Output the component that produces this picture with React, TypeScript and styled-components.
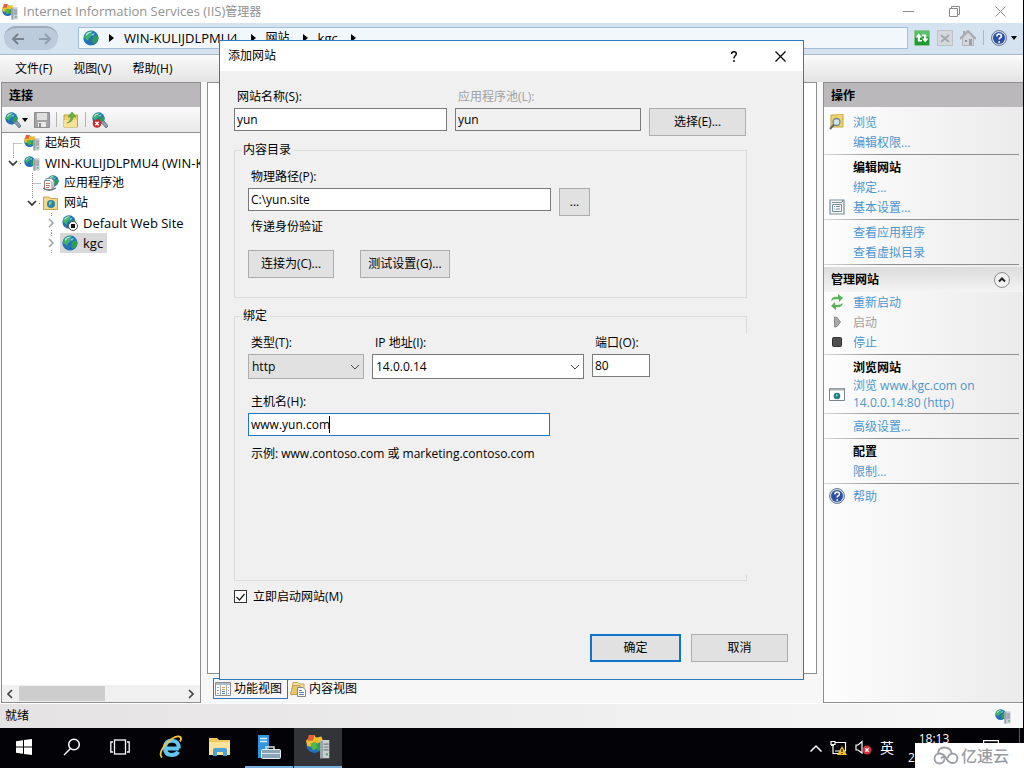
import React from 'react';
import styled, { createGlobalStyle, css } from 'styled-components';

const GlobalStyle = createGlobalStyle`
  *, *::before, *::after { box-sizing: border-box; }
  body {
    margin: 0;
    background: #000;
    color: #000;
    font: 12px/16px "Open Sans", "Noto Sans CJK SC", sans-serif;
  }
  button, input, select { font: inherit; color: inherit; margin: 0; }
  button { border: 0; padding: 0; background: none; }
  svg { display: block; flex: none; }
`;

/* ---------- page frame ---------- */

const Desktop = styled.div`
  position: relative;
  display: flex;
  flex-direction: column;
  min-height: 100vh;
`;

const AppWindow = styled.div`
  flex: 1;
  display: flex;
  flex-direction: column;
  background: #f7f7f7;
  border-right: 1px solid #000;
`;

const TitleBar = styled.header`
  display: flex;
  align-items: center;
  height: 23px;
  padding-left: 2px;
  background: #fff;
  color: #929292;
  font-size: 13px;
`;

const TitleText = styled.span`
  flex: 1;
  padding-left: 5px;
`;

const Han = styled.span`
  font-size: 12px;
`;

const CaptionButton = styled.button`
  display: flex;
  align-items: center;
  justify-content: center;
  width: 46px;
  height: 22px;
  color: #8a8a8a;
`;

const AddressBar = styled.div`
  display: flex;
  align-items: center;
  height: 32px;
  padding: 0 6px 2px 4px;
  background: #d5e2ef;
  border-bottom: 1px solid #a9b8c8;
`;

const NavPill = styled.div`
  display: flex;
  align-items: center;
  justify-content: space-around;
  width: 54px;
  height: 24px;
  margin-right: 20px;
  border-radius: 12px;
  border-top: 2px solid #9eabb9;
  background: #bccbdc;
  color: #78838f;
`;

const Crumbs = styled.nav`
  flex: 1;
  display: flex;
  align-items: center;
  gap: 10px;
  height: 22px;
  padding-left: 4px;
  margin-right: 6px;
  background: #f2f7fc;
  border: 1px solid #a4bfd8;
`;

const Crumb = styled.span<{ $latin?: boolean }>`
  margin-right: 3px;
  font-size: ${p => (p.$latin ? 13 : 12)}px;
`;

const AddressTools = styled.div`
  display: flex;
  align-items: center;
  gap: 7px;
`;

const Separator = styled.i`
  width: 1px;
  height: 15px;
  background: #b4b4b4;
`;

const MenuBar = styled.nav`
  display: flex;
  align-items: center;
  gap: 21px;
  height: 27px;
  padding-left: 15px;
  background: linear-gradient(#fbfbfb, #e5e4e5);
`;

const Workspace = styled.div`
  flex: 1;
  display: grid;
  grid-template-columns: 200px minmax(0, 1fr) 200px;
  gap: 6px;
  padding-left: 1px;
`;

const Pane = styled.section`
  display: flex;
  flex-direction: column;
  min-width: 0;
  border: 1px solid #8e8e8e;
  background: #fff;
`;

const PaneTitle = styled.h2`
  margin: 0;
  height: 24px;
  padding-left: 7px;
  background: #bab8bb;
  font-size: 12px;
  line-height: 26px;
`;

const PaneTools = styled.div`
  display: flex;
  align-items: center;
  gap: 6px;
  height: 26px;
  padding-left: 3px;
  background: linear-gradient(#fbfbfb, #e8e8e8);
  border-bottom: 1px solid #8e8e8e;
`;

const ToolPair = styled.button<{ $loose?: boolean }>`
  display: flex;
  align-items: center;
  gap: ${p => (p.$loose ? 4 : 1)}px;
`;

/* ---------- tree ---------- */

const Tree = styled.ul`
  flex: 1;
  margin: 0;
  padding: 0;
  list-style: none;
  overflow: hidden;
`;

const TreeRow = styled.li`
  display: flex;
  align-items: center;
  height: 20px;
  white-space: nowrap;
`;

const TreeNode = styled.span<{ $selected?: boolean; $latin?: boolean }>`
  display: flex;
  align-items: center;
  gap: 5px;
  height: 20px;
  padding: 0 4px 0 2px;
  font-size: ${p => (p.$latin ? 13 : 12)}px;
  background: ${p => (p.$selected ? '#d9d9d9' : 'transparent')};
`;

const ScrollTrack = styled.div`
  display: flex;
  align-items: center;
  height: 17px;
  padding: 0 4px 0 3px;
  gap: 4px;
  background: #f0f0f0;
`;

const ScrollSpace = styled.div`
  flex: 1;
  height: 15px;
`;

const ScrollThumb = styled.div`
  width: 53%;
  height: 100%;
  background: #cdcdcd;
`;

/* ---------- centre ---------- */

const Centre = styled.div`
  display: flex;
  flex-direction: column;
  min-width: 0;
`;

const Canvas = styled(Pane)`
  flex: 1;
`;

const ViewTabs = styled.div`
  display: flex;
  height: 29px;
  padding: 4px 0 0 6px;
`;

const ViewTab = styled.button<{ $active?: boolean }>`
  display: flex;
  align-items: center;
  gap: 3px;
  height: 21px;
  padding: 0 5px 0 1px;
  border: 1px solid ${p => (p.$active ? '#2b77bd' : 'transparent')};
`;

/* ---------- actions ---------- */

const ActionsPane = styled(Pane)`
  border-right: 0;
  background: linear-gradient(90deg, #fdfdfd, #ebebeb);
`;

const ActionList = styled.div`
  padding-top: 5px;
`;

const ActionRow = styled.div`
  display: grid;
  grid-template-columns: 16px 1fr;
  align-items: center;
  column-gap: 8px;
  min-height: 20px;
  padding-left: 5px;
`;

const ActionLink = styled.a<{ $wide?: boolean }>`
  grid-column: 2;
  padding-top: 2px;
  color: #4b97cf;
  text-decoration: none;
  ${p => p.$wide && css`
    padding-top: 0;
    line-height: 17px;
  `}
`;

const ActionOff = styled.span`
  grid-column: 2;
  padding-top: 2px;
  color: #a0a0a0;
`;

const ActionHeading = styled.strong`
  grid-column: 2;
  padding-top: 2px;
`;

const Rule = styled.hr`
  height: 1px;
  margin: 2px 4px 2px 0;
  border: 0;
  background: linear-gradient(90deg, #d8d8d8, #8e8e8e 30%);
`;

const GroupBar = styled.div`
  display: flex;
  align-items: center;
  justify-content: space-between;
  height: 25px;
  padding: 0 13px 0 7px;
  background: linear-gradient(#dcdcdc, #f4f4f4);
  font-weight: bold;
`;

const StatusBar = styled.footer`
  display: flex;
  align-items: center;
  justify-content: space-between;
  height: 25px;
  padding: 0 12px 0 5px;
  border-top: 1px solid #fff;
  background: linear-gradient(90deg, #e4e2e3, #f8f8f8);
`;

/* ---------- dialog ---------- */

const Overlay = styled.div`
  position: absolute;
  inset: 0;
  display: flex;
  justify-content: center;
  align-items: flex-start;
  padding: 40px 1px 0 0;
`;

const Dialog = styled.form`
  width: 585px;
  height: 640px;
  display: flex;
  flex-direction: column;
  border: 1px solid #2b7cbc;
  background: #f0f0f0;
`;

const DialogTitle = styled.div`
  display: flex;
  align-items: center;
  height: 30px;
  padding-left: 3px;
  background: #fff;
`;

const DialogBody = styled.div`
  flex: 1;
  padding: 16px 15px 0 14px;
`;

const Row = styled.div<{ $gap?: number }>`
  display: flex;
  align-items: flex-start;
  gap: ${p => p.$gap || 8}px;
`;

const Field = styled.div<{ $w: number }>`
  width: ${p => p.$w}px;
`;

const Label = styled.label<{ $muted?: boolean }>`
  display: block;
  height: 21px;
  padding-left: 3px;
  line-height: 19px;
  color: ${p => (p.$muted ? '#a0a0a0' : '#000')};
`;

const Note = styled.p`
  margin: 0;
  padding-left: 3px;
  line-height: 18px;
`;

const TextBox = styled.input<{ $focus?: boolean }>`
  display: block;
  width: 100%;
  height: 23px;
  padding: 0 2px;
  border: 1px solid ${p => (p.$focus ? '#1f78c1' : '#7a7a7a')};
  border-radius: 0;
  background: #fff;
  outline: 0;
  &:read-only { background: #f0f0f0; }
`;

const Over = styled.div`
  position: relative;
`;

const Caret = styled.i`
  position: absolute;
  left: 81px;
  top: 3px;
  width: 1px;
  height: 17px;
  background: #000;
`;

const Arrow = styled.span`
  position: absolute;
  right: 4px;
  top: 8px;
  pointer-events: none;
`;

const Picker = styled.select<{ $grey?: boolean }>`
  appearance: none;
  display: block;
  width: 100%;
  height: 25px;
  padding: 0 3px;
  border: 1px solid ${p => (p.$grey ? '#adadad' : '#7a7a7a')};
  border-radius: 0;
  background: ${p => (p.$grey ? '#e1e1e1' : '#fff')};
`;

const PushButton = styled.button<{ $w: number; $primary?: boolean; $beside?: boolean }>`
  width: ${p => p.$w}px;
  height: 28px;
  margin-top: ${p => (p.$beside ? 21 : 0)}px;
  background: #e1e1e1;
  border: ${p => (p.$primary ? '2px solid #0f74cc' : '1px solid #adadad')};
`;

const Group = styled.fieldset<{ $h: number; $open?: boolean }>`
  width: 513px;
  height: ${p => p.$h}px;
  min-width: 0;
  margin: 0;
  padding: 9px 13px 0;
  border: 1px solid #dcdcdc;
  ${p => p.$open && css`
    border-right: 0;
    background:
      linear-gradient(#dcdcdc, #dcdcdc) right top / 1px 16px no-repeat,
      linear-gradient(#dcdcdc, #dcdcdc) right bottom / 1px 5px no-repeat;
  `}
`;

const Legend = styled.legend`
  height: 16px;
  margin-left: -7px;
  padding: 0 3px 0 2px;
`;

const Stack = styled.div<{ $gap: number }>`
  display: flex;
  flex-direction: column;
  gap: ${p => p.$gap}px;
`;

const CheckLine = styled.label`
  display: flex;
  align-items: center;
  gap: 6px;
  line-height: 19px;
`;

const CheckBox = styled.input`
  appearance: none;
  width: 13px;
  height: 13px;
  border: 1px solid #333;
  background: #fff;
`;

const Tick = styled.span`
  position: absolute;
  left: 2px;
  top: 6px;
  pointer-events: none;
`;

const DialogFooter = styled.div`
  display: flex;
  justify-content: flex-end;
  gap: 10px;
  padding: 0 15px 17px;
`;

/* ---------- taskbar ---------- */

const Taskbar = styled.div`
  position: relative;
  display: flex;
  align-items: center;
  height: 40px;
  background: #020207;
  color: #fff;
`;

const TaskGroup = styled.div`
  display: flex;
  gap: 1px;
  padding-left: 3px;
`;

const TaskButton = styled.button<{ $running?: boolean; $active?: boolean }>`
  display: flex;
  align-items: center;
  justify-content: center;
  width: 48px;
  height: 40px;
  background: ${p => (p.$active ? '#333438' : 'transparent')};
  border-bottom: 2px solid transparent;
  border-bottom-color: ${p => (p.$running ? '#76b0dd' : 'transparent')};
`;

const Tray = styled.div`
  display: flex;
  align-items: center;
  gap: 8px;
  margin-left: auto;
  font-size: 14px;
`;

const Clock = styled.div`
  width: 52px;
  height: 40px;
  margin: 0 23px 0 14px;
  padding-top: 1px;
  font-size: 12px;
  line-height: 19px;
  text-align: center;
`;

const DateText = styled.div`
  text-align: left;
`;

const DesktopEdge = styled.i`
  width: 5px;
  height: 40px;
  margin-left: 20px;
  border-left: 1px solid #55555a;
`;

const Watermark = styled.div`
  position: absolute;
  right: 0;
  bottom: 0;
  display: flex;
  align-items: center;
  gap: 2px;
  width: 109px;
  height: 25px;
  padding-left: 18px;
  background: #fff;
  color: #9a9ca4;
  font-size: 16px;
  line-height: 24px;
  font-weight: 500;
`;

/* ---------- drawings ---------- */

const GlobeShape = ({ x = 0, y = 0, r = 7 }: { x?: number; y?: number; r?: number }) => (
  <g transform={`translate(${x} ${y}) scale(${r / 8})`}>
    <circle cx="8" cy="8" r="7.6" fill="#2470b8" />
    <path d="M2 4 Q6 0 10 1 L8 4 L9 6 L6 8 L5 11 L3 9 L1 8 Z" fill="#3fb46b" />
    <path d="M10 7 L14 5 L15.500 8 Q15 12 11 14 L9 11 Z" fill="#2f9d58" />
    <path d="M3 4 Q6 1 9 2 Q5 3 3 6 Z" fill="#c4ecf4" />
    <path d="M8 4 L12 3 L10 6 Z" fill="#86d0f0" />
  </g>
);

const GlobeIcon = () => (
  <svg width="16" height="16" viewBox="0 0 16 16"><GlobeShape r={8} /></svg>
);

const TowerShape = () => (
  <g transform="translate(10 4)">
    <path d="M0 .5L2 -.5H6.500V12.500H0Z" fill="#c9ced2" />
    <path d="M0 .5L2 0V12.500H0Z" fill="#98a2a9" />
    <path d="M2.500 2.500H6M2.500 4.500H6M2.500 6.500H6" stroke="#6d7982" strokeWidth=".8" />
    <rect x="4" y="9" width="1.500" height="1.500" fill="#3fae5a" />
  </g>
);

const ServerIcon = ({ warm, size = 16 }: { warm?: boolean; size?: number }) => (
  <svg width={size} height={size} viewBox="0 0 17 17">
    <GlobeShape r={6} y={1} />
    {warm && <path d="M0 4L3 1L6 0L7 2L11 1L12 4L8 6L5 5L4 8L1 8Z" fill="#f4bd2c" />}
    {warm && <path d="M2 0L6 0L5 4L1 4Z" fill="#e2603a" />}
    {warm && <path d="M3 6L7 5L8 9L5 11Z" fill="#52b84c" />}
    <TowerShape />
  </svg>
);

const TriRight = () => (
  <svg width="5" height="8" viewBox="0 0 5 8"><path d="M0 0L5 4L0 8Z" fill="#000" /></svg>
);

const TriDown = () => (
  <svg width="6" height="4" viewBox="0 0 6 4"><path d="M0 0H6L3 4Z" fill="#000" /></svg>
);

const NavArrow = ({ back }: { back?: boolean }) => (
  <svg width="14" height="12" viewBox="0 0 14 12" fill="none" stroke="currentColor" strokeWidth="2" opacity={back ? 1 : 0.6}>
    <path d={back ? 'M13 6H2M7 1L2 6L7 11' : 'M1 6H12M7 1L12 6L7 11'} />
  </svg>
);

const RefreshBox = () => (
  <svg width="16" height="16" viewBox="0 0 16 16">
    <rect x=".5" y=".5" width="15" height="15" rx="1" fill="#1f9a30" stroke="#8cc795" />
    <rect x="1" y="1" width="14" height="6" fill="#57c163" />
    <path d="M1.500 7.500L4.800 3.500L8 7.500H6V10H8V11.500H3.800V7.500ZM14.500 8.500L11.200 12.500L8 8.500H10V6H8V4.500H12.200V8.500Z" fill="#fff" />
  </svg>
);

const StopBox = () => (
  <svg width="16" height="16" viewBox="0 0 16 16">
    <rect x=".5" y=".5" width="15" height="15" fill="#d6d9dc" stroke="#bdc1c5" />
    <path d="M4 5L12 12M12 5L4 12" stroke="#a6aaae" strokeWidth="2" />
  </svg>
);

const HomeIcon = () => (
  <svg width="16" height="16" viewBox="0 0 16 16">
    <path d="M2.500 8V15.500H13.500V8L8 2Z" fill="#d5d6d8" stroke="#b3b5b8" />
    <path d="M0 9L8 1L16 9" fill="none" stroke="#a8aaad" strokeWidth="2" />
    <path d="M3 1H5V4H3Z" fill="#a6a8aa" />
    <rect x="5" y="10" width="2" height="2" fill="#8d949b" />
    <rect x="9" y="9" width="3" height="6" fill="#98a0a8" />
  </svg>
);

const HelpIcon = () => (
  <svg width="16" height="16" viewBox="0 0 16 16">
    <circle cx="8" cy="8" r="7.500" fill="#d4dbe8" stroke="#6d7b95" />
    <circle cx="8" cy="8" r="6" fill="#2b50a8" />
    <path d="M5.800 6.400Q5.900 4 8.100 4Q10.400 4 10.400 6Q10.400 7.200 9 8Q8.200 8.500 8.200 9.600" fill="none" stroke="#fff" strokeWidth="1.600" />
    <circle cx="8.200" cy="12" r="1" fill="#fff" />
  </svg>
);

const ConnectIcon = ({ stop }: { stop?: boolean }) => (
  <svg width="16" height="16" viewBox="0 0 16 16">
    <GlobeShape r={6.5} />
    <path d="M9 10L12 9L16 14L14 16Z" fill="#8fa2b0" stroke="#64798a" />
    {stop && <circle cx="5" cy="11.500" r="4.300" fill="#cc2a2a" />}
    {stop && <path d="M3.300 9.800L6.700 13.200M6.700 9.800L3.300 13.200" stroke="#fff" strokeWidth="1.500" />}
  </svg>
);

const FloppyIcon = () => (
  <svg width="16" height="16" viewBox="0 0 16 16">
    <path d="M.5 .5H15.500V15.500H.5Z" fill="#a3a3a3" stroke="#8b8b8b" />
    <rect x="3" y="1" width="10" height="7" fill="#dedede" />
    <rect x="4" y="10" width="8" height="5" fill="#e8e8e8" />
    <rect x="5" y="11" width="2" height="4" fill="#8b8b8b" />
  </svg>
);

const FolderUpIcon = () => (
  <svg width="16" height="16" viewBox="0 0 16 16">
    <path d="M1 3H14.500V15H1Z" fill="#efd277" stroke="#c39f42" />
    <path d="M1 8H14V15H1Z" fill="#f6e199" />
    <path d="M4 11Q8 9 8 5H5L9 0L13 5H10Q10 10 4 11Z" fill="#62b53a" stroke="#3f8b27" strokeWidth=".5" />
  </svg>
);

const PoolIcon = () => (
  <svg width="16" height="16" viewBox="0 0 16 16">
    <GlobeShape r={6} x={4} />
    <path d="M3 3.500H8.500L11 6V13H3Z" fill="#fff" stroke="#8a929b" />
    <path d="M1.500 5.500H7L9 7.500V14.500H1.500Z" fill="#fff" stroke="#7e8791" />
    <path d="M3 8.500H7M3 10.500H7M3 12.500H6" stroke="#db6c55" />
    <path d="M0 13Q6 17.500 13 13" fill="none" stroke="#6b7680" strokeWidth="1.300" />
  </svg>
);

const SitesIcon = () => (
  <svg width="16" height="16" viewBox="0 0 16 16">
    <path d="M.5 2H6L8 3.500H14.500V14.500H.5Z" fill="#f4d88e" stroke="#cfa550" />
    <circle cx="8" cy="9" r="4" fill="#2b87a8" />
    <path d="M6 7L9 6L8 9L6 11Z" fill="#7ed096" />
  </svg>
);

const SiteStoppedIcon = () => (
  <svg width="16" height="16" viewBox="0 0 16 16">
    <GlobeShape r={7} />
    <circle cx="11" cy="11" r="4.500" fill="#fff" stroke="#555" />
    <rect x="9" y="9" width="4" height="4" fill="#111" />
  </svg>
);

const ChevronGlyph = ({ dir, thin }: { dir: 'down' | 'left' | 'right'; thin?: boolean }) => {
  const d = { down: 'M1 3L5 7L9 3', left: 'M7 1L3 5L7 9', right: 'M3 1L7 5L3 9' }[dir];
  return (
    <svg width="10" height="10" viewBox="0 0 10 10" fill="none" stroke="#444" strokeWidth={thin ? 1 : 1.7}><path d={d} /></svg>
  );
};

const Guide = ({ width, kind }: { width: number; kind: 'top' | 'server' | 'branch' | 'open' | 'leaf' }) => (
  <svg width={width} height="20" viewBox={`0 0 ${width} 20`} fill="none">
    {kind === 'top' && <path d="M11.500 10.500V20M11.500 10.500H22" stroke="#888" strokeDasharray="1 1" />}
    {kind === 'server' && <path d="M11.500 0V5M18 10.500H22" stroke="#888" strokeDasharray="1 1" />}
    {kind === 'server' && <path d="M7 8L11 12L15 8" stroke="#333" strokeWidth="1.700" />}
    {kind === 'branch' && <path d="M30.500 0V20M30.500 10.500H41" stroke="#888" strokeDasharray="1 1" />}
    {kind === 'open' && <path d="M30.500 0V5M37 10.500H41" stroke="#888" strokeDasharray="1 1" />}
    {kind === 'open' && <path d="M26 8L30 12L34 8" stroke="#333" strokeWidth="1.700" />}
    {kind === 'leaf' && <path d="M49.500 0V3M49.500 17V20" stroke="#999" strokeDasharray="1 1" />}
    {kind === 'leaf' && <path d="M47 6L51 10L47 14" stroke="#a0a0a0" strokeWidth="1.500" />}
  </svg>
);

const FeaturesIcon = () => (
  <svg width="16" height="16" viewBox="0 0 16 16" fill="none">
    <path d="M.5 1.500H15.500V14.500H.5Z" fill="#fff" stroke="#8a8f95" />
    <path d="M1 3H15" stroke="#b0bac4" strokeWidth="2" />
    <path d="M5.500 4V14M11.500 4V14" stroke="#a5adb5" />
    <path d="M2 6.500H4M2 9.500H4M2 12.500H4M13 6.500H14M13 9.500H14M13 12.500H14" stroke="#8fa6bd" />
    <path d="M7 6.500H10M7 8.500H10" stroke="#ef9b48" />
    <path d="M7 10.500H10M7 12.500H10" stroke="#5f87b5" />
  </svg>
);

const ContentIcon = () => (
  <svg width="16" height="16" viewBox="0 0 16 16">
    <path d="M3 1.500H8L9.500 3H14V8L1 14Z" fill="#f7e3a4" stroke="#c7a14d" />
    <path d="M.5 13L3 4.500H10V13.500H1Z" fill="#edc66b" stroke="#c7a14d" />
    <path d="M7.500 6.500H13L15.500 9V15.500H7.500Z" fill="#fff" stroke="#7e8790" />
    <path d="M9 9.500H12M9 11.500H14M9 13.500H14" stroke="#5e83b3" />
  </svg>
);

const ExploreIcon = () => (
  <svg width="16" height="16" viewBox="0 0 16 16">
    <path d="M2 1H8L9 0H14V13H2Z" fill="#eed36e" stroke="#c8a542" />
    <circle cx="7.500" cy="8" r="3.500" fill="#cfe6f2" stroke="#728291" strokeWidth="1.300" />
    <path d="M5 10.500L1 15" stroke="#666" strokeWidth="2" />
  </svg>
);

const SettingsSheetIcon = () => (
  <svg width="16" height="16" viewBox="0 0 16 16" fill="none" stroke="#78909a">
    <path d="M1 1H15V15H1Z" fill="#f5f7f8" strokeWidth="1.200" />
    <path d="M3 3.500H13M3.500 5.500H12.500V12.500H3.500ZM5 7.500H6M7 7.500H11M5 10H6M7 10H11M13.500 1V3" />
  </svg>
);

const RestartIcon = () => (
  <svg width="16" height="16" viewBox="0 0 16 16" fill="#58b354">
    <path d="M2 7Q3 2 9 3L9 0L14 4L10 8V5.500Q6 4 2 7Z" />
    <path d="M14 9Q13 14 7 13L7 16L2 12L6 8V10.500Q10 12 14 9Z" />
  </svg>
);

const PlayIcon = () => (
  <svg width="16" height="16" viewBox="0 0 16 16"><path d="M5.500 3V13L8 12.500L11.500 8L8 3.500Z" fill="#a8a8a8" stroke="#878787" /></svg>
);

const StopIcon = () => (
  <svg width="16" height="16" viewBox="0 0 16 16"><rect x="3.500" y="3.500" width="9" height="9" rx="1" fill="#505050" stroke="#333" /></svg>
);

const BrowseSiteIcon = () => (
  <svg width="16" height="16" viewBox="0 0 16 16">
    <path d="M.5 2.500H15.500V14.500H.5Z" fill="#fff" stroke="#7c8389" />
    <path d="M1 3.500H15" stroke="#a9b0b6" strokeWidth="2" />
    <circle cx="8" cy="10" r="3.300" fill="#247f91" />
    <path d="M7 8L9 9L7 11Z" fill="#8ddd9b" />
  </svg>
);

const CollapseIcon = () => (
  <svg width="16" height="16" viewBox="0 0 16 16" fill="none">
    <circle cx="8" cy="8" r="7.500" fill="#f1f1f1" stroke="#8c8c8c" />
    <path d="M5 9.500L8 6.500L11 9.500" stroke="#222" strokeWidth="2" />
  </svg>
);

/* ---------- page ---------- */

const ConnectionsPane = () => (
  <Pane>
    <PaneTitle>连接</PaneTitle>
    <PaneTools>
      <ToolPair type="button" aria-label="连接"><ConnectIcon /><TriDown /></ToolPair>
      <ToolPair type="button" aria-label="保存"><FloppyIcon /></ToolPair>
      <Separator />
      <ToolPair type="button" aria-label="向上"><FolderUpIcon /></ToolPair>
      <Separator />
      <ToolPair type="button" aria-label="断开"><ConnectIcon stop /></ToolPair>
    </PaneTools>
    <Tree>
      <TreeRow><Guide width={20} kind="top" /><TreeNode><ServerIcon warm />起始页</TreeNode></TreeRow>
      <TreeRow><Guide width={20} kind="server" /><TreeNode $latin><ServerIcon />WIN-KULIJDLPMU4 (WIN-KULIJDLPMU4)</TreeNode></TreeRow>
      <TreeRow><Guide width={39} kind="branch" /><TreeNode><PoolIcon />应用程序池</TreeNode></TreeRow>
      <TreeRow><Guide width={39} kind="open" /><TreeNode><SitesIcon />网站</TreeNode></TreeRow>
      <TreeRow><Guide width={58} kind="leaf" /><TreeNode $latin><SiteStoppedIcon />Default Web Site</TreeNode></TreeRow>
      <TreeRow><Guide width={58} kind="leaf" /><TreeNode $latin $selected><GlobeIcon />kgc</TreeNode></TreeRow>
    </Tree>
    <ScrollTrack>
      <ChevronGlyph dir="left" />
      <ScrollSpace><ScrollThumb /></ScrollSpace>
      <ChevronGlyph dir="right" />
    </ScrollTrack>
  </Pane>
);

const Actions = () => (
  <ActionsPane>
    <PaneTitle>操作</PaneTitle>
    <ActionList>
      <ActionRow><ExploreIcon /><ActionLink href="#">浏览</ActionLink></ActionRow>
      <ActionRow><ActionLink href="#">编辑权限...</ActionLink></ActionRow>
      <Rule />
      <ActionRow><ActionHeading>编辑网站</ActionHeading></ActionRow>
      <ActionRow><ActionLink href="#">绑定...</ActionLink></ActionRow>
      <ActionRow><SettingsSheetIcon /><ActionLink href="#">基本设置...</ActionLink></ActionRow>
      <Rule />
      <ActionRow><ActionLink href="#">查看应用程序</ActionLink></ActionRow>
      <ActionRow><ActionLink href="#">查看虚拟目录</ActionLink></ActionRow>
      <Rule />
      <GroupBar>管理网站<button type="button" aria-label="折叠"><CollapseIcon /></button></GroupBar>
      <ActionRow><RestartIcon /><ActionLink href="#">重新启动</ActionLink></ActionRow>
      <ActionRow><PlayIcon /><ActionOff>启动</ActionOff></ActionRow>
      <ActionRow><StopIcon /><ActionLink href="#">停止</ActionLink></ActionRow>
      <Rule />
      <ActionRow><ActionHeading>浏览网站</ActionHeading></ActionRow>
      <ActionRow><BrowseSiteIcon /><ActionLink href="#" $wide>浏览 www.kgc.com on<br />14.0.0.14:80 (http)</ActionLink></ActionRow>
      <Rule />
      <ActionRow><ActionLink href="#">高级设置...</ActionLink></ActionRow>
      <Rule />
      <ActionRow><ActionHeading>配置</ActionHeading></ActionRow>
      <ActionRow><ActionLink href="#">限制...</ActionLink></ActionRow>
      <Rule />
      <ActionRow><HelpIcon /><ActionLink href="#">帮助</ActionLink></ActionRow>
    </ActionList>
  </ActionsPane>
);

const AddSiteDialog = () => (
  <Dialog onSubmit={e => e.preventDefault()} aria-label="添加网站">
    <DialogTitle>
      <TitleText>添加网站</TitleText>
      <CaptionButton type="button" aria-label="帮助">
        <svg width="8" height="11" viewBox="0 0 8 11" fill="none" stroke="#000" strokeWidth="1.400"><path d="M1.500 3Q1.500 .8 4 .8Q6.300 .8 6.300 2.800Q6.300 4 5 5Q4 5.800 4 7.500" /><path d="M4 9V11" /></svg>
      </CaptionButton>
      <CaptionButton type="button" aria-label="关闭">
        <svg width="11" height="11" viewBox="0 0 11 11" stroke="#000" strokeWidth="1.200"><path d="M.5 .5L10.500 10.500M10.500 .5L.5 10.500" /></svg>
      </CaptionButton>
    </DialogTitle>
    <DialogBody>
      <Stack $gap={6}>
        <Row>
          <Field $w={213}>
            <Label htmlFor="site">网站名称(S):</Label>
            <TextBox id="site" defaultValue="yun" />
          </Field>
          <Field $w={186}>
            <Label htmlFor="pool" $muted>应用程序池(L):</Label>
            <TextBox id="pool" value="yun" readOnly />
          </Field>
          <PushButton type="button" $w={97} $beside>选择(E)...</PushButton>
        </Row>
        <Stack $gap={10}>
          <Group $h={156}>
            <Legend>内容目录</Legend>
            <Stack $gap={2}>
              <Row>
                <Field $w={303}>
                  <Label htmlFor="path">物理路径(P):</Label>
                  <TextBox id="path" defaultValue="C:\yun.site" />
                </Field>
                <PushButton type="button" $w={31} $beside>...</PushButton>
              </Row>
              <Stack $gap={14}>
                <Note>传递身份验证</Note>
                <Row $gap={26}>
                  <PushButton type="button" $w={86}>连接为(C)...</PushButton>
                  <PushButton type="button" $w={90}>测试设置(G)...</PushButton>
                </Row>
              </Stack>
            </Stack>
          </Group>
          <Group $h={273} $open>
            <Legend>绑定</Legend>
            <Stack $gap={13}>
              <Row>
                <Field $w={116}>
                  <Label htmlFor="type">类型(T):</Label>
                  <Over>
                    <Picker id="type" $grey><option>http</option></Picker>
                    <Arrow><ChevronGlyph dir="down" thin /></Arrow>
                  </Over>
                </Field>
                <Field $w={212}>
                  <Label htmlFor="ip">IP 地址(I):</Label>
                  <Over>
                    <Picker id="ip"><option>14.0.0.14</option></Picker>
                    <Arrow><ChevronGlyph dir="down" thin /></Arrow>
                  </Over>
                </Field>
                <Field $w={58}>
                  <Label htmlFor="port">端口(O):</Label>
                  <TextBox id="port" defaultValue="80" />
                </Field>
              </Row>
              <Stack $gap={9}>
                <Field $w={302}>
                  <Label htmlFor="host">主机名(H):</Label>
                  <Over>
                    <TextBox id="host" defaultValue="www.yun.com" $focus />
                    <Caret />
                  </Over>
                </Field>
                <Note>示例: www.contoso.com 或 marketing.contoso.com</Note>
              </Stack>
            </Stack>
          </Group>
        </Stack>
        <Over>
          <CheckLine><CheckBox type="checkbox" defaultChecked />立即启动网站(M)</CheckLine>
          <Tick><svg width="9" height="8" viewBox="0 0 9 8" fill="none" stroke="#222" strokeWidth="1.300"><path d="M.5 4L3.500 7L8.500 1" /></svg></Tick>
        </Over>
      </Stack>
    </DialogBody>
    <DialogFooter>
      <PushButton type="submit" $w={91} $primary>确定</PushButton>
      <PushButton type="button" $w={97}>取消</PushButton>
    </DialogFooter>
  </Dialog>
);

const TaskbarRow = () => (
  <Taskbar>
    <TaskButton aria-label="开始">
      <svg width="16" height="16" viewBox="0 0 16 16" fill="#fff"><path d="M0 2.300L7 1.300V7.500H0ZM8 1.100L16 0V7.500H8ZM0 8.500H7V14.700L0 13.700ZM8 8.500H16V16L8 14.900Z" /></svg>
    </TaskButton>
    <TaskButton aria-label="搜索">
      <svg width="18" height="18" viewBox="0 0 18 18" fill="none" stroke="#fff" strokeWidth="1.500"><circle cx="11" cy="6.500" r="5.300" /><path d="M7.500 10.500L1 17" /></svg>
    </TaskButton>
    <TaskButton aria-label="任务视图">
      <svg width="20" height="16" viewBox="0 0 20 16" fill="none" stroke="#fff" strokeWidth="1.300"><rect x="4.500" y="1" width="11" height="14" /><path d="M3 3H.8V13H3M17 3H19.200V13H17" /></svg>
    </TaskButton>
    <TaskGroup>
      <TaskButton aria-label="Internet Explorer">
        <svg width="24" height="24" viewBox="0 0 24 24" fill="none">
          <path d="M20 13.500H8M19.800 13.500Q20 5.800 13 5.800Q6 5.800 6 13Q6 20 13 20Q17.500 20 19.200 16.800" stroke="#63c5f1" strokeWidth="4" />
          <path d="M3 22.500Q-1 19 6 10Q14 1 20 1.500Q23.500 2 21 6.500" stroke="#f3c63a" strokeWidth="1.800" />
        </svg>
      </TaskButton>
      <TaskButton aria-label="文件资源管理器">
        <svg width="22" height="20" viewBox="0 0 22 20">
          <path d="M0 1H8L10 3H21V18H0Z" fill="#f0c85e" />
          <path d="M0 5H21V18H0Z" fill="#fce39b" />
          <path d="M4 19V13Q4 11 6 11H16Q18 11 18 13V19H14V15H8V19Z" fill="#4aa3d2" />
        </svg>
      </TaskButton>
      <TaskButton $running aria-label="服务器管理器">
        <svg width="24" height="24" viewBox="0 0 24 24">
          <path d="M1 0H12V23H1Z" fill="#3297dd" />
          <path d="M3 3.500H10M3 6.500H10" stroke="#d8efff" strokeWidth="1.300" />
          <path d="M9 15V12H17V15" fill="none" stroke="#d8e3ea" strokeWidth="1.500" />
          <rect x="4.500" y="14.500" width="19" height="9" rx="1" fill="#8aa5b8" stroke="#e0ebf2" />
          <path d="M5 18.500H23" stroke="#dce8ef" />
        </svg>
      </TaskButton>
      <TaskButton $running $active aria-label="IIS 管理器"><ServerIcon warm size={24} /></TaskButton>
    </TaskGroup>
    <Tray>
      <svg width="12" height="7" viewBox="0 0 12 7" fill="none" stroke="#fff" strokeWidth="1.500"><path d="M.5 6.500L6 1L11.500 6.500" /></svg>
      <svg width="17" height="16" viewBox="0 0 17 16" fill="none">
        <path d="M5 2.500H15.500V11H5M1 1.500H5V4.500H1ZM3 5V13.500H8M1 5.500H4" stroke="#fff" strokeWidth="1.200" />
        <path d="M12 6L17 15H7Z" fill="#f5c126" />
        <path d="M12 9V12M12 13V14" stroke="#222" strokeWidth="1.300" />
      </svg>
      <svg width="17" height="16" viewBox="0 0 17 16" fill="none">
        <path d="M1 5H3L7 1.500V13L3 10H1Z" stroke="#fff" strokeWidth="1.200" />
        <circle cx="12" cy="10" r="4.500" fill="#d4303d" />
        <path d="M10.300 8.300L13.700 11.700M13.700 8.300L10.300 11.700" stroke="#fff" strokeWidth="1.300" />
      </svg>
      <span>英</span>
    </Tray>
    <Clock>18:13<DateText>2</DateText></Clock>
    <svg width="16" height="16" viewBox="0 0 16 16" fill="none" stroke="#fff" strokeWidth="1.200"><path d="M.6 .6H15.400V11.500H10L8 14L6 11.500H.6Z" /></svg>
    <DesktopEdge />
    <Watermark>
      <svg width="26" height="19" viewBox="0 0 26 19" fill="none" stroke="#9a9ca4" strokeWidth="1.800">
        <path d="M5 8Q5 1.500 11.500 1.500Q17.500 1.500 18.800 7.500" />
        <path d="M11.500 12.500A5 5 0 1 1 6.500 7.500Q10 7.500 12.500 11Q15.500 17 19.500 17A4.700 4.700 0 1 0 15 12" />
        <path d="M8 12.500Q10 9.500 14.500 12.500" />
      </svg>
      亿速云
    </Watermark>
  </Taskbar>
);

export default function App() {
  return (
    <Desktop>
      <GlobalStyle />
      <AppWindow>
        <TitleBar>
          <ServerIcon warm />
          <TitleText>Internet Information Services (IIS)<Han>管理器</Han></TitleText>
          <CaptionButton type="button" aria-label="最小化"><svg width="11" height="1" viewBox="0 0 11 1"><path d="M0 0H11V1H0Z" fill="currentColor" /></svg></CaptionButton>
          <CaptionButton type="button" aria-label="还原"><svg width="11" height="11" viewBox="0 0 11 11" fill="none" stroke="currentColor"><path d="M.5 2.500H8.500V10.500H.5ZM2.500 2V.5H10.500V8.500H9" /></svg></CaptionButton>
          <CaptionButton type="button" aria-label="关闭"><svg width="11" height="11" viewBox="0 0 11 11" stroke="currentColor"><path d="M.5 .5L10.500 10.500M10.500 .5L.5 10.500" /></svg></CaptionButton>
        </TitleBar>
        <AddressBar>
          <NavPill><NavArrow back /><NavArrow /></NavPill>
          <Crumbs>
            <GlobeIcon /><TriRight /><Crumb $latin>WIN-KULIJDLPMU4</Crumb><TriRight /><Crumb>网站</Crumb><TriRight /><Crumb $latin>kgc</Crumb><TriRight />
          </Crumbs>
          <AddressTools>
            <RefreshBox /><StopBox /><HomeIcon /><Separator />
            <ToolPair type="button" aria-label="帮助" $loose><HelpIcon /><TriDown /></ToolPair>
          </AddressTools>
        </AddressBar>
        <MenuBar><span>文件(F)</span><span>视图(V)</span><span>帮助(H)</span></MenuBar>
        <Workspace>
          <ConnectionsPane />
          <Centre>
            <Canvas />
            <ViewTabs>
              <ViewTab type="button" $active><FeaturesIcon />功能视图</ViewTab>
              <ViewTab type="button"><ContentIcon />内容视图</ViewTab>
            </ViewTabs>
          </Centre>
          <Actions />
        </Workspace>
        <StatusBar>就绪<ServerIcon /></StatusBar>
      </AppWindow>
      <TaskbarRow />
      <Overlay><AddSiteDialog /></Overlay>
    </Desktop>
  );
}
